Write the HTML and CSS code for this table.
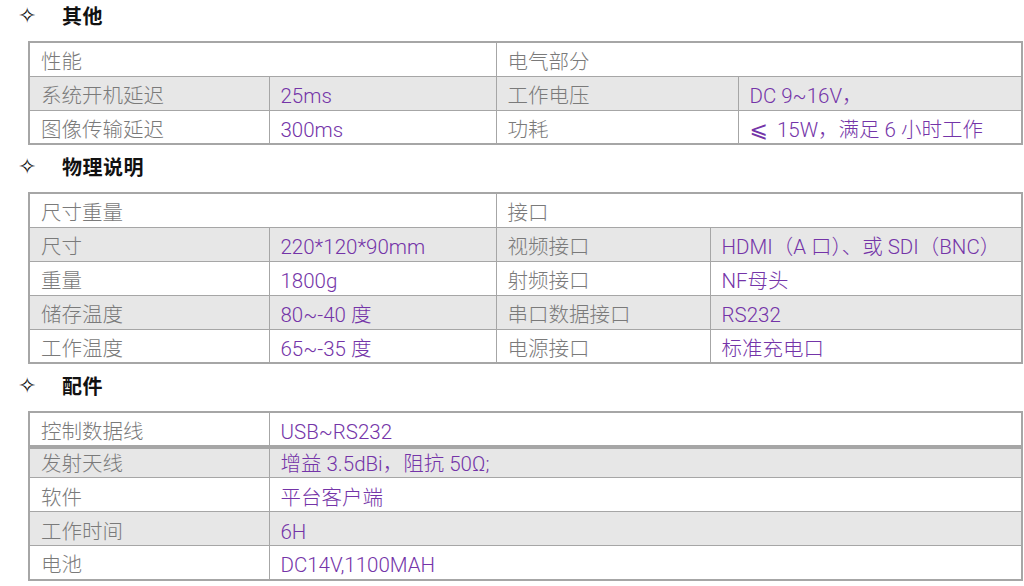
FILE: index.html
```html
<!DOCTYPE html>
<html lang="zh">
<head>
<meta charset="utf-8">
<link rel="stylesheet" href="styles.css">
</head>
<body>
<div class="page">
  <h2 class="sec"><span class="star">✧</span><span class="sec-title">其他</span></h2>
  <table class="spec t1">
    <colgroup><col class="c1"><col class="c2"><col class="c3a"><col class="c4a"></colgroup>
    <tr class="head"><td colspan="2">性能</td><td colspan="2">电气部分</td></tr>
    <tr class="alt"><td>系统开机延迟</td><td class="v">25ms</td><td>工作电压</td><td class="v">DC 9~16V，</td></tr>
    <tr><td>图像传输延迟</td><td class="v">300ms</td><td>功耗</td><td class="v"><span class="sym">⩽</span> 15W，满足 6 小时工作</td></tr>
  </table>

  <h2 class="sec"><span class="star">✧</span><span class="sec-title">物理说明</span></h2>
  <table class="spec t2">
    <colgroup><col class="c1"><col class="c2"><col class="c3b"><col class="c4b"></colgroup>
    <tr class="head"><td colspan="2">尺寸重量</td><td colspan="2">接口</td></tr>
    <tr class="alt"><td>尺寸</td><td class="v">220*120*90mm</td><td>视频接口</td><td class="v">HDMI（A 口）、或 SDI（BNC）</td></tr>
    <tr><td>重量</td><td class="v">1800g</td><td>射频接口</td><td class="v">NF母头</td></tr>
    <tr class="alt"><td>储存温度</td><td class="v">80~-40 度</td><td>串口数据接口</td><td class="v">RS232</td></tr>
    <tr><td>工作温度</td><td class="v">65~-35 度</td><td>电源接口</td><td class="v">标准充电口</td></tr>
  </table>

  <h2 class="sec"><span class="star">✧</span><span class="sec-title">配件</span></h2>
  <table class="spec t3">
    <colgroup><col class="c1"><col class="c2w"></colgroup>
    <tr class="thick"><td>控制数据线</td><td class="v">USB~RS232</td></tr>
    <tr class="alt short"><td>发射天线</td><td class="v">增益 3.5dBi，阻抗 50Ω;</td></tr>
    <tr><td>软件</td><td class="v">平台客户端</td></tr>
    <tr class="alt"><td>工作时间</td><td class="v">6H</td></tr>
    <tr><td>电池</td><td class="v">DC14V,1100MAH</td></tr>
  </table>
</div>
</body>
</html>
```

FILE: styles.css
```css
html, body {
  margin: 0;
  padding: 0;
  background: #ffffff;
}
.page {
  width: 1024px;
  font-family: "Noto Sans CJK SC", "Noto Sans", sans-serif;
}
.sec {
  margin: 0 0 8px 0;
  height: 33px;
  line-height: 33px;
  display: flex;
  align-items: center;
  font-size: 20px;
  font-weight: 700;
  color: #111111;
  position: relative;
  top: -1px;
}
.star {
  width: 62px;
  padding-left: 18px;
  box-sizing: border-box;
  font-family: "DejaVu Sans", sans-serif;
  font-weight: 400;
  font-size: 22px;
}
.sec-title {
  letter-spacing: 0.5px;
}
.spec {
  margin: 0 0 6px 28px;
  width: 993px;
  border-collapse: collapse;
  table-layout: fixed;
  border: 2px solid #a6a6a6;
}
.spec td {
  border: 1px solid #a6a6a6;
  height: 34px;
  padding: 6px 11px 0 11px;
  box-sizing: border-box;
  font-family: "Roboto", "Noto Sans CJK SC", sans-serif;
  font-size: 20.5px;
  font-weight: 300;
  line-height: 26px;
  color: #7a7a7a;
  white-space: nowrap;
  vertical-align: middle;
  overflow: hidden;
}
.spec td.v {
  color: #7434a8;
}
.sym {
  font-family: "DejaVu Sans", "Noto Sans CJK SC", sans-serif;
  font-weight: 400;
  font-size: 22px;
  margin-right: 4px;
}
.spec tr.alt td {
  background: #e7e7e7;
}
.c1 { width: 240px; }
.c2 { width: 227px; }
.c3a { width: 242px; }
.c4a { width: 284px; }
.c3b { width: 214px; }
.c4b { width: 312px; }
.c2w { width: 753px; }
.t3 tr.thick td {
  border-bottom: 4px solid #a6a6a6;
}
.t3 tr.short td {
  height: 30px;
  padding-top: 2px;
}
```
